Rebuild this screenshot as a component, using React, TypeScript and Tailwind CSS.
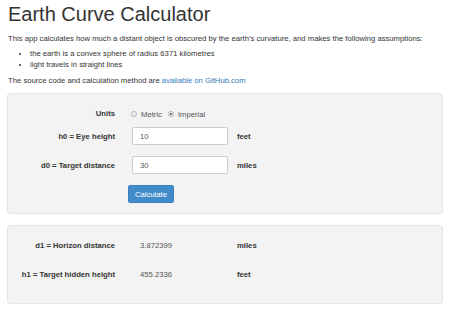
const inputs = [
  { label: "h0 = Eye height", value: "10", unit: "feet" },
  { label: "d0 = Target distance", value: "30", unit: "miles" },
];

const results = [
  { label: "d1 = Horizon distance", value: "3.872399", unit: "miles" },
  { label: "h1 = Target hidden height", value: "455.2336", unit: "feet" },
];

const Radio = ({ checked, label }: { checked?: boolean; label: string }) => (
  <label className="flex items-center gap-[4px]">
    <span className="w-[6px] h-[6px] rounded-full border border-[#b5b5b5] bg-[#f0f0f0] flex items-center justify-center">
      {checked && <span className="w-[2px] h-[2px] rounded-full bg-[#555]" />}
    </span>
    <span>{label}</span>
  </label>
);

export default function App() {
  return (
    <div
      className="w-[450px] h-[311px] bg-white px-[7px] text-[#333] text-[7.7px] leading-[11px] overflow-hidden"
      style={{ fontFamily: '"Liberation Sans", Arial, sans-serif' }}
    >
      <h1 className="text-[20px] leading-[23px] mt-[3px] ml-px text-[#333]">Earth Curve Calculator</h1>

      <p className="mt-[7px] ml-px">
        This app calculates how much a distant object is obscured by the earth's curvature, and makes the following assumptions:
      </p>
      <ul className="mt-[4px] ml-[15px] list-disc pl-[8px]">
        <li>the earth is a convex sphere of radius 6371 kilometres</li>
        <li>light travels in straight lines</li>
      </ul>
      <p className="mt-[5px] ml-px">
        The source code and calculation method are <a className="text-[#337ab7]">available on GitHub.com</a>
      </p>

      {/* Inputs */}
      <div className="mt-[7px] h-[121px] rounded-[3px] border border-[#e5e5e5] bg-[#f3f3f3] pt-[14px]">
        <div className="grid grid-cols-[107px_96px_auto] gap-x-[17px] items-center">
          <div className="text-right font-bold h-[12px] leading-[12px]">Units</div>
          <div className="col-span-2 flex items-center gap-[6px] text-[#555] h-[12px] -ml-[1px]">
            <Radio label="Metric" />
            <Radio checked label="Imperial" />
          </div>
        </div>
        <div className="mt-[7px] flex flex-col gap-[11px]">
          {inputs.map((row) => (
            <div key={row.label} className="grid grid-cols-[107px_96px_auto] gap-x-[17px] items-center">
              <div className="text-right font-bold">{row.label}</div>
              <div className="h-[18px] rounded-[2px] border border-[#ccc] bg-white px-[7px] flex items-center text-[#555]">
                {row.value}
              </div>
              <div className="font-bold -ml-[8px]">{row.unit}</div>
            </div>
          ))}
          <div className="grid grid-cols-[107px_auto] gap-x-[13px]">
            <div />
            <button className="w-[46px] h-[18px] rounded-[2px] bg-[#428bca] border border-[#3b7fc0] text-white text-[7.7px]">
              Calculate
            </button>
          </div>
        </div>
      </div>

      {/* Results */}
      <div className="mt-[11px] h-[79px] rounded-[3px] border border-[#e5e5e5] bg-[#f3f3f3] pt-[13px] flex flex-col gap-[17px]">
        {results.map((row) => (
          <div key={row.label} className="grid grid-cols-[107px_122px_auto] items-center h-[12px]">
            <div className="text-right font-bold">{row.label}</div>
            <div className="text-[#555] pl-[25px]">{row.value}</div>
            <div className="font-bold">{row.unit}</div>
          </div>
        ))}
      </div>
    </div>
  );
}
